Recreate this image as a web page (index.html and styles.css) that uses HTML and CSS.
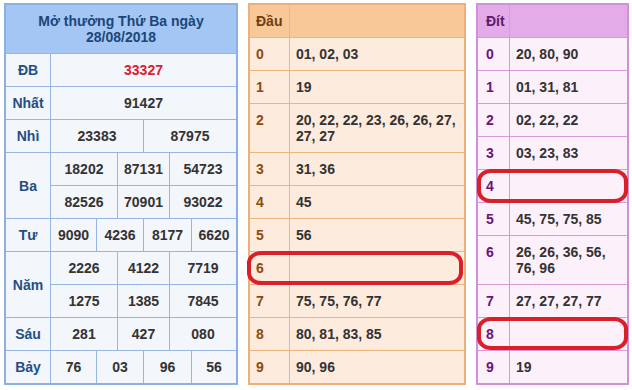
FILE: index.html
```html
<!DOCTYPE html>
<html lang="vi">
<head>
<meta charset="utf-8">
<title>Kết quả XSMB 28/08/2018</title>
<link rel="stylesheet" href="styles.css">
</head>
<body>
<div class="page">
  <div class="kq">
    <div class="kq-head">Mở thưởng Thứ Ba ngày<br>28/08/2018</div>

    <div class="lbl">ĐB</div>
    <div class="val s6 red">33327</div>

    <div class="lbl">Nhất</div>
    <div class="val s6">91427</div>

    <div class="lbl">Nhì</div>
    <div class="val s3">23383</div>
    <div class="val s3">87975</div>

    <div class="lbl r2">Ba</div>
    <div class="val s2">18202</div>
    <div class="val s2">87131</div>
    <div class="val s2">54723</div>
    <div class="val s2">82526</div>
    <div class="val s2">70901</div>
    <div class="val s2">93022</div>

    <div class="lbl">Tư</div>
    <div class="val">9090</div>
    <div class="val s2">4236</div>
    <div class="val s2">8177</div>
    <div class="val">6620</div>

    <div class="lbl r2">Năm</div>
    <div class="val s2">2226</div>
    <div class="val s2">4122</div>
    <div class="val s2">7719</div>
    <div class="val s2">1275</div>
    <div class="val s2">1385</div>
    <div class="val s2">7845</div>

    <div class="lbl">Sáu</div>
    <div class="val s2">281</div>
    <div class="val s2">427</div>
    <div class="val s2">080</div>

    <div class="lbl">Bảy</div>
    <div class="val">76</div>
    <div class="val s2">03</div>
    <div class="val s2">96</div>
    <div class="val">56</div>
  </div>

  <div class="wrap">
    <div class="lt dau">
      <div class="h">Đầu</div><div class="h"></div>
      <div class="k">0</div><div class="v">01, 02, 03</div>
      <div class="k">1</div><div class="v">19</div>
      <div class="k">2</div><div class="v">20, 22, 22, 23, 26, 26, 27, 27, 27</div>
      <div class="k">3</div><div class="v">31, 36</div>
      <div class="k">4</div><div class="v">45</div>
      <div class="k">5</div><div class="v">56</div>
      <div class="k">6</div><div class="v"></div>
      <div class="k">7</div><div class="v">75, 75, 76, 77</div>
      <div class="k">8</div><div class="v">80, 81, 83, 85</div>
      <div class="k">9</div><div class="v">90, 96</div>
    </div>
    <div class="mark mark-dau6"></div>
  </div>

  <div class="wrap">
    <div class="lt dit">
      <div class="h">Đít</div><div class="h"></div>
      <div class="k">0</div><div class="v">20, 80, 90</div>
      <div class="k">1</div><div class="v">01, 31, 81</div>
      <div class="k">2</div><div class="v">02, 22, 22</div>
      <div class="k">3</div><div class="v">03, 23, 83</div>
      <div class="k">4</div><div class="v"></div>
      <div class="k">5</div><div class="v">45, 75, 75, 85</div>
      <div class="k">6</div><div class="v">26, 26, 36, 56, 76, 96</div>
      <div class="k">7</div><div class="v">27, 27, 27, 77</div>
      <div class="k">8</div><div class="v"></div>
      <div class="k">9</div><div class="v">19</div>
    </div>
    <div class="mark mark-dit4"></div>
    <div class="mark mark-dit8"></div>
  </div>
</div>
</body>
</html>
```

FILE: styles.css
```css
html, body {
  margin: 0;
  padding: 0;
  background: #ffffff;
}

body {
  font-family: "Liberation Sans", Arial, sans-serif;
  font-size: 14px;
  font-weight: bold;
  line-height: 16px;
  color: #333333;
}

.page {
  display: flex;
  align-items: flex-start;
  gap: 10px;
  padding: 3px 0 0 4px;
}

/* ---------- left results table ---------- */
.kq {
  display: grid;
  grid-template-columns: 44px 45px 20px 25px 25px 21px 44px;
  grid-template-rows: 48px;
  grid-auto-rows: 32px;
  gap: 1px;
  background: #97b7e2;
  border: 2px solid #8cb0e0;
}

.kq-head {
  grid-column: 1 / -1;
  background: #a3c6f4;
  color: #1b4677;
  text-align: center;
  padding: 8px 0;
}

.lbl {
  grid-column: 1;
  background: #f3f6fb;
  color: #1f4f85;
  display: flex;
  align-items: center;
  justify-content: center;
}

.lbl.r2 {
  grid-row: span 2;
}

.val {
  background: #f3f6fb;
  color: #333333;
  display: flex;
  align-items: center;
  justify-content: center;
}

.s2 { grid-column: span 2; }
.s3 { grid-column: span 3; }
.s6 { grid-column: span 6; }

.red { color: #d92231; }

/* ---------- đầu / đít tables ---------- */
.wrap {
  position: relative;
}

.lt {
  display: grid;
  gap: 1px;
}

.lt .h,
.lt .k,
.lt .v {
  padding: 8px 6px;
  min-height: 16px;
}

.dau {
  grid-template-columns: 39px 174px;
  background: #eeb57f;
  border: 2px solid #eeb07a;
}

.dau .h { background: #f9c898; color: #6e3d12; }
.dau .k { background: #fdebdd; color: #8b4a10; }
.dau .v { background: #fdebdd; color: #333333; }

.dit {
  grid-template-columns: 31px 117px;
  background: #d898dc;
  border: 2px solid #d390d9;
}

.dit .h { background: #e3abe8; color: #5e1a6c; padding-left: 8px; }
.dit .k { background: #fcf0fb; color: #6a137a; padding-left: 8px; }
.dit .v { background: #fcf0fb; color: #333333; }

/* ---------- red hand-drawn highlights ---------- */
.mark {
  position: absolute;
  border: 4px solid #d91f27;
  border-radius: 14px / 12px;
  box-sizing: border-box;
}

.mark-dau6 {
  left: -1px;
  top: 248px;
  width: 216px;
  height: 34px;
}

.mark-dit4 {
  left: 1px;
  top: 166px;
  width: 151px;
  height: 34px;
}

.mark-dit8 {
  left: 1px;
  top: 314px;
  width: 151px;
  height: 33px;
}
```
